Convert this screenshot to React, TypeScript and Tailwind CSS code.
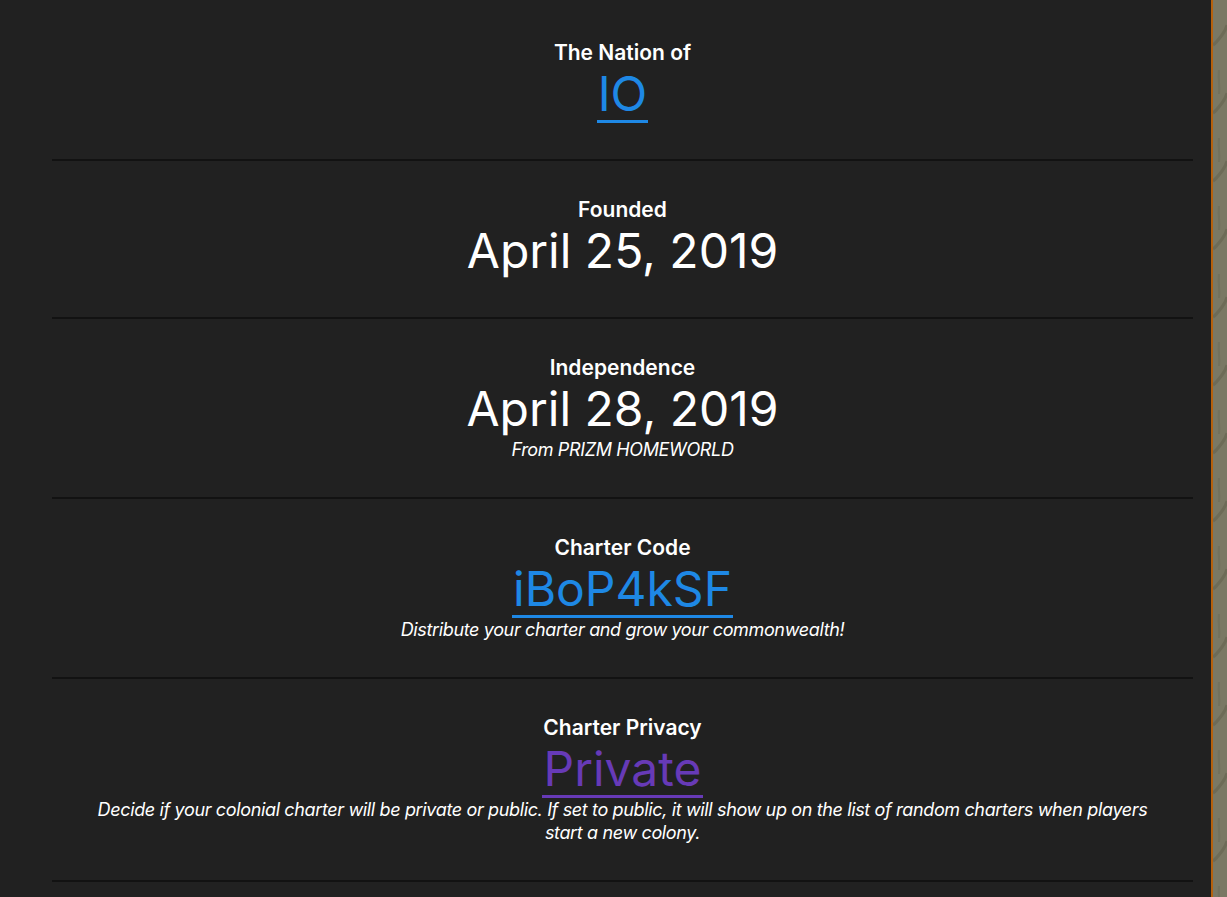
import type { ReactNode } from 'react';

type Section = {
  label: string;
  value: string;
  tone?: 'blue' | 'purple';
  note?: ReactNode;
  first?: boolean;
  spacer?: boolean;
};

const sections: Section[] = [
  { label: 'The Nation of', value: 'IO', tone: 'blue', first: true },
  { label: 'Founded', value: 'April 25, 2019', spacer: true },
  {
    label: 'Independence',
    value: 'April 28, 2019',
    note: <p className="text-lg leading-[23px] italic tracking-[-0.02em]">From PRIZM HOMEWORLD</p>,
  },
  {
    label: 'Charter Code',
    value: 'iBoP4kSF',
    tone: 'blue',
    note: (
      <p className="text-lg leading-[23px] italic tracking-[-0.02em]">
        Distribute your charter and grow your commonwealth!
      </p>
    ),
  },
  {
    label: 'Charter Privacy',
    value: 'Private',
    tone: 'purple',
    note: (
      <p className="text-lg leading-[23px] italic tracking-[-0.02em]">
        Decide if your colonial charter will be private or public. If set to public, it will show up on the
        list of random charters when players start a new colony.
      </p>
    ),
  },
];

function StoneEdge() {
  return (
    <div className="w-[14px] shrink-0 bg-[#7a7864] overflow-hidden">
      <svg width="14" height="897" viewBox="0 0 14 897" className="block">
        {Array.from({ length: 14 }).map((_, i) => {
          const y = 45 + i * 68;
          return (
            <path
              key={i}
              d={`M0 ${y} C3 ${y - 2} 6 ${y - 6} 9 ${y - 10} S13 ${y - 16} 14 ${y - 20}`}
              stroke="#55533f"
              strokeWidth="3"
              fill="none"
              opacity="0.35"
            />
          );
        })}
        {Array.from({ length: 14 }).map((_, i) => {
          const y = 70 + i * 68;
          return (
            <path
              key={`v${i}`}
              d={`M6 ${y} C5 ${y + 8} 7 ${y + 16} 6 ${y + 24}`}
              stroke="#55533f"
              strokeWidth="2"
              fill="none"
              opacity="0.2"
            />
          );
        })}
      </svg>
    </div>
  );
}

export default function App() {
  return (
    <div className="flex min-h-screen bg-[#212121] text-white font-['Inter','Liberation_Sans',sans-serif]">
      <main className="flex-1 pl-[52px] pr-[18px]">
        {sections.map((s) => (
          <section
            key={s.label}
            className={`border-b-2 border-[#121212] px-[30px] pb-9 text-center ${s.first ? 'pt-[39px]' : 'pt-[35px]'}`}
          >
            <h2 className="text-[21px] leading-7 font-semibold">{s.label}</h2>
            <div className="pt-px">
              {s.tone === 'blue' && (
                <a className="inline-block border-b-[3px] border-[#1e88e5] px-px text-5xl leading-[52px] text-[#1e88e5]">
                  {s.value}
                </a>
              )}
              {s.tone === 'purple' && (
                <a className="inline-block border-b-[3px] border-[#673ab7] px-px text-5xl leading-[52px] text-[#673ab7]">
                  {s.value}
                </a>
              )}
              {!s.tone && (
                <span className="inline-block border-b-[3px] border-transparent text-5xl leading-[52px]">
                  {s.value}
                </span>
              )}
            </div>
            {s.note}
            {s.spacer && <div className="h-px" />}
          </section>
        ))}
      </main>
      <div className="w-0.5 shrink-0 bg-[#b5610d]" />
      <StoneEdge />
    </div>
  );
}
